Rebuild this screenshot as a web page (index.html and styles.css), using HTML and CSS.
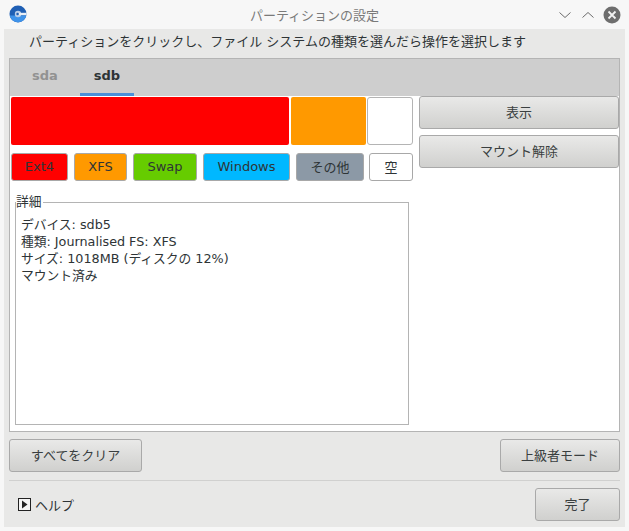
FILE: index.html
```html
<!DOCTYPE html>
<html lang="ja">
<head>
<meta charset="utf-8">
<title>パーティションの設定</title>
<link rel="stylesheet" href="styles.css">
</head>
<body>
<div class="window">
  <header class="titlebar">
    <svg class="app-icon" width="18" height="18" viewBox="0 0 18 18">
      <circle cx="9" cy="9" r="8.5" fill="#1f5fb4"/>
      <path d="M.7 10.5A8.5 8.5 0 0 0 17.3 10.5H9V10.5Z" fill="#3f93ea"/>
      <circle cx="9" cy="9" r="3.2" fill="#b9cde8"/>
      <rect x="9" y="7.8" width="8.5" height="2.4" fill="#e8eef6"/>
      <circle cx="8.6" cy="9" r="1.3" fill="#1f5fb4"/>
    </svg>
    <span class="title">パーティションの設定</span>
    <div class="controls">
      <svg width="16" height="16" viewBox="0 0 16 16"><path d="M2.5 5.5 8 10.5l5.5-5" fill="none" stroke="#6b6b6b"/></svg>
      <svg width="16" height="16" viewBox="0 0 16 16"><path d="M2.5 10.5 8 5.5l5.5 5" fill="none" stroke="#6b6b6b"/></svg>
      <svg width="18" height="18" viewBox="0 0 18 18"><circle cx="9" cy="9" r="8.5" fill="#6e6e6e"/><path d="M5.5 5.5l7 7M12.5 5.5l-7 7" stroke="#f2f2f2" stroke-width="1.8"/></svg>
    </div>
  </header>
  <main class="content">
    <p class="intro">パーティションをクリックし、ファイル システムの種類を選んだら操作を選択します</p>
    <section class="notebook">
      <nav class="tabs">
        <span class="tab">sda</span>
        <span class="tab active">sdb</span>
      </nav>
      <div class="page">
        <div class="left">
          <div class="bar">
            <div class="seg seg-red"></div>
            <div class="seg seg-orange"></div>
            <div class="seg seg-white"></div>
          </div>
          <div class="legend">
            <span class="chip chip-ext4">Ext4</span>
            <span class="chip chip-xfs">XFS</span>
            <span class="chip chip-swap">Swap</span>
            <span class="chip chip-win">Windows</span>
            <span class="chip chip-other">その他</span>
            <span class="chip chip-empty">空</span>
          </div>
          <div class="details">
            <span class="details-label">詳細</span>
            <p>デバイス: sdb5</p>
            <p>種類: Journalised FS: XFS</p>
            <p>サイズ: 1018MB (ディスクの 12%)</p>
            <p>マウント済み</p>
          </div>
        </div>
        <div class="right">
          <button class="btn">表示</button>
          <button class="btn">マウント解除</button>
        </div>
      </div>
    </section>
    <div class="row-actions">
      <button class="btn btn-clear">すべてをクリア</button>
      <button class="btn btn-expert">上級者モード</button>
    </div>
    <hr class="sep">
    <div class="row-footer">
      <span class="help">
        <svg width="13" height="13" viewBox="0 0 13 13"><rect x=".5" y=".5" width="12" height="12" fill="#f4f4f4" stroke="#222"/><path d="M4 2.5 9.5 6.5 4 10.5Z" fill="#222"/></svg>
        ヘルプ
      </span>
      <button class="btn btn-done">完了</button>
    </div>
  </main>
</div>
</body>
</html>
```

FILE: styles.css
```css
* { box-sizing: border-box; }
html, body { margin: 0; padding: 0; }
body {
  width: 629px;
  height: 531px;
  background: #f7f7f7;
  font-family: "DejaVu Sans", "Noto Sans CJK JP", sans-serif;
  font-size: 13px;
  color: #2e3436;
  overflow: hidden;
}
.window { display: flex; flex-direction: column; height: 531px; }
.titlebar {
  height: 29px;
  display: flex;
  align-items: center;
  justify-content: center;
  position: relative;
  background: #f7f7f7;
}
.app-icon { position: absolute; left: 9px; top: 5px; }
.title { color: #7a7a7a; font-size: 13px; }
.controls {
  position: absolute;
  right: 8px;
  top: 6px;
  display: flex;
  align-items: center;
  gap: 7px;
}
.content {
  margin: 0 4px 4px;
  height: 498px;
  background: #e8e8e7;
  padding: 0 5px;
  display: flex;
  flex-direction: column;
}
.intro {
  margin: 0;
  height: 29px;
  line-height: 26px;
  padding-left: 20px;
  font-size: 13px;
  white-space: nowrap;
}
.notebook {
  height: 374px;
  width: 611px;
  border: 1px solid #b4b4b4;
  background: #fff;
  display: flex;
  flex-direction: column;
}
.tabs {
  height: 37px;
  background: #cecece;
  display: flex;
  padding-left: 7px;
  flex: none;
}
.tab {
  width: 56px;
  margin-right: 8px;
  text-align: center;
  font-weight: 700;
  font-size: 13px;
  line-height: 34px;
  color: #929292;
}
.tab.active {
  color: #2e3436;
  width: 54px;
  margin-left: -1px;
  border-bottom: 3px solid #4a90d9;
}
.page { display: flex; flex: 1; padding: 0 0 0 1px; }
.left { width: 408px; flex: none; padding-top: 1px; }
.bar { display: flex; gap: 2px; height: 48px; }
.seg { border-radius: 2px; }
.seg-red { width: 278px; background: #ff0000; }
.seg-orange { width: 75px; background: #ff9900; }
.seg-white { width: 46px; margin-left: -1px; background: #fff; border: 1px solid #b4b4b4; border-radius: 3px; }
.legend { display: flex; gap: 6px; margin-top: 8px; height: 28px; }
.chip {
  display: flex;
  align-items: center;
  justify-content: center;
  border: 1px solid #a8a8a8;
  border-radius: 3px;
  font-size: 13px;
  padding-bottom: 2px;
  color: #2e3436;
}
.chip-ext4 { width: 57px; background: #ff0000; }
.chip-xfs { width: 53px; background: #ff9900; }
.chip-swap { width: 64px; background: #66cc00; }
.chip-win { width: 87px; background: #00b8ff; }
.chip-other { width: 68px; background: #8c99a6; }
.chip-empty { width: 44px; margin-left: -1px; background: #fff; }
.details {
  position: relative;
  margin: 21px 0 0 4px;
  width: 394px;
  height: 223px;
  border: 1px solid #b4b4b4;
  padding: 13px 5px 0;
  font-size: 12.75px;
  line-height: 17px;
}
.details p { margin: 0; white-space: nowrap; }
.details-label {
  position: absolute;
  left: 0;
  top: -10px;
  background: #fff;
  padding-right: 1px;
  line-height: 17px;
}
.right {
  width: 200px;
  display: flex;
  flex-direction: column;
  gap: 6px;
}
.btn {
  font-family: "DejaVu Sans", "Noto Sans CJK JP", sans-serif;
  font-size: 13px;
  color: #3a3f40;
  height: 33px;
  padding: 0 0 2px;
  border: 1px solid #a9a9a9;
  border-radius: 3px;
  background: linear-gradient(#e9e9e8, #d0d0ce);
}
.row-actions {
  display: flex;
  justify-content: space-between;
  width: 611px;
  margin-top: 7px;
}
.btn-clear { width: 133px; }
.btn-expert { width: 120px; }
.sep {
  width: 611px;
  height: 1px;
  margin: 8px 0 7px;
  border: 0;
  background: #d0d0cf;
}
.row-footer {
  display: flex;
  justify-content: space-between;
  align-items: center;
  width: 611px;
}
.help {
  display: flex;
  align-items: center;
  gap: 4px;
  padding-left: 9px;
  font-size: 13px;
}
.btn-done { width: 85px; }
```
